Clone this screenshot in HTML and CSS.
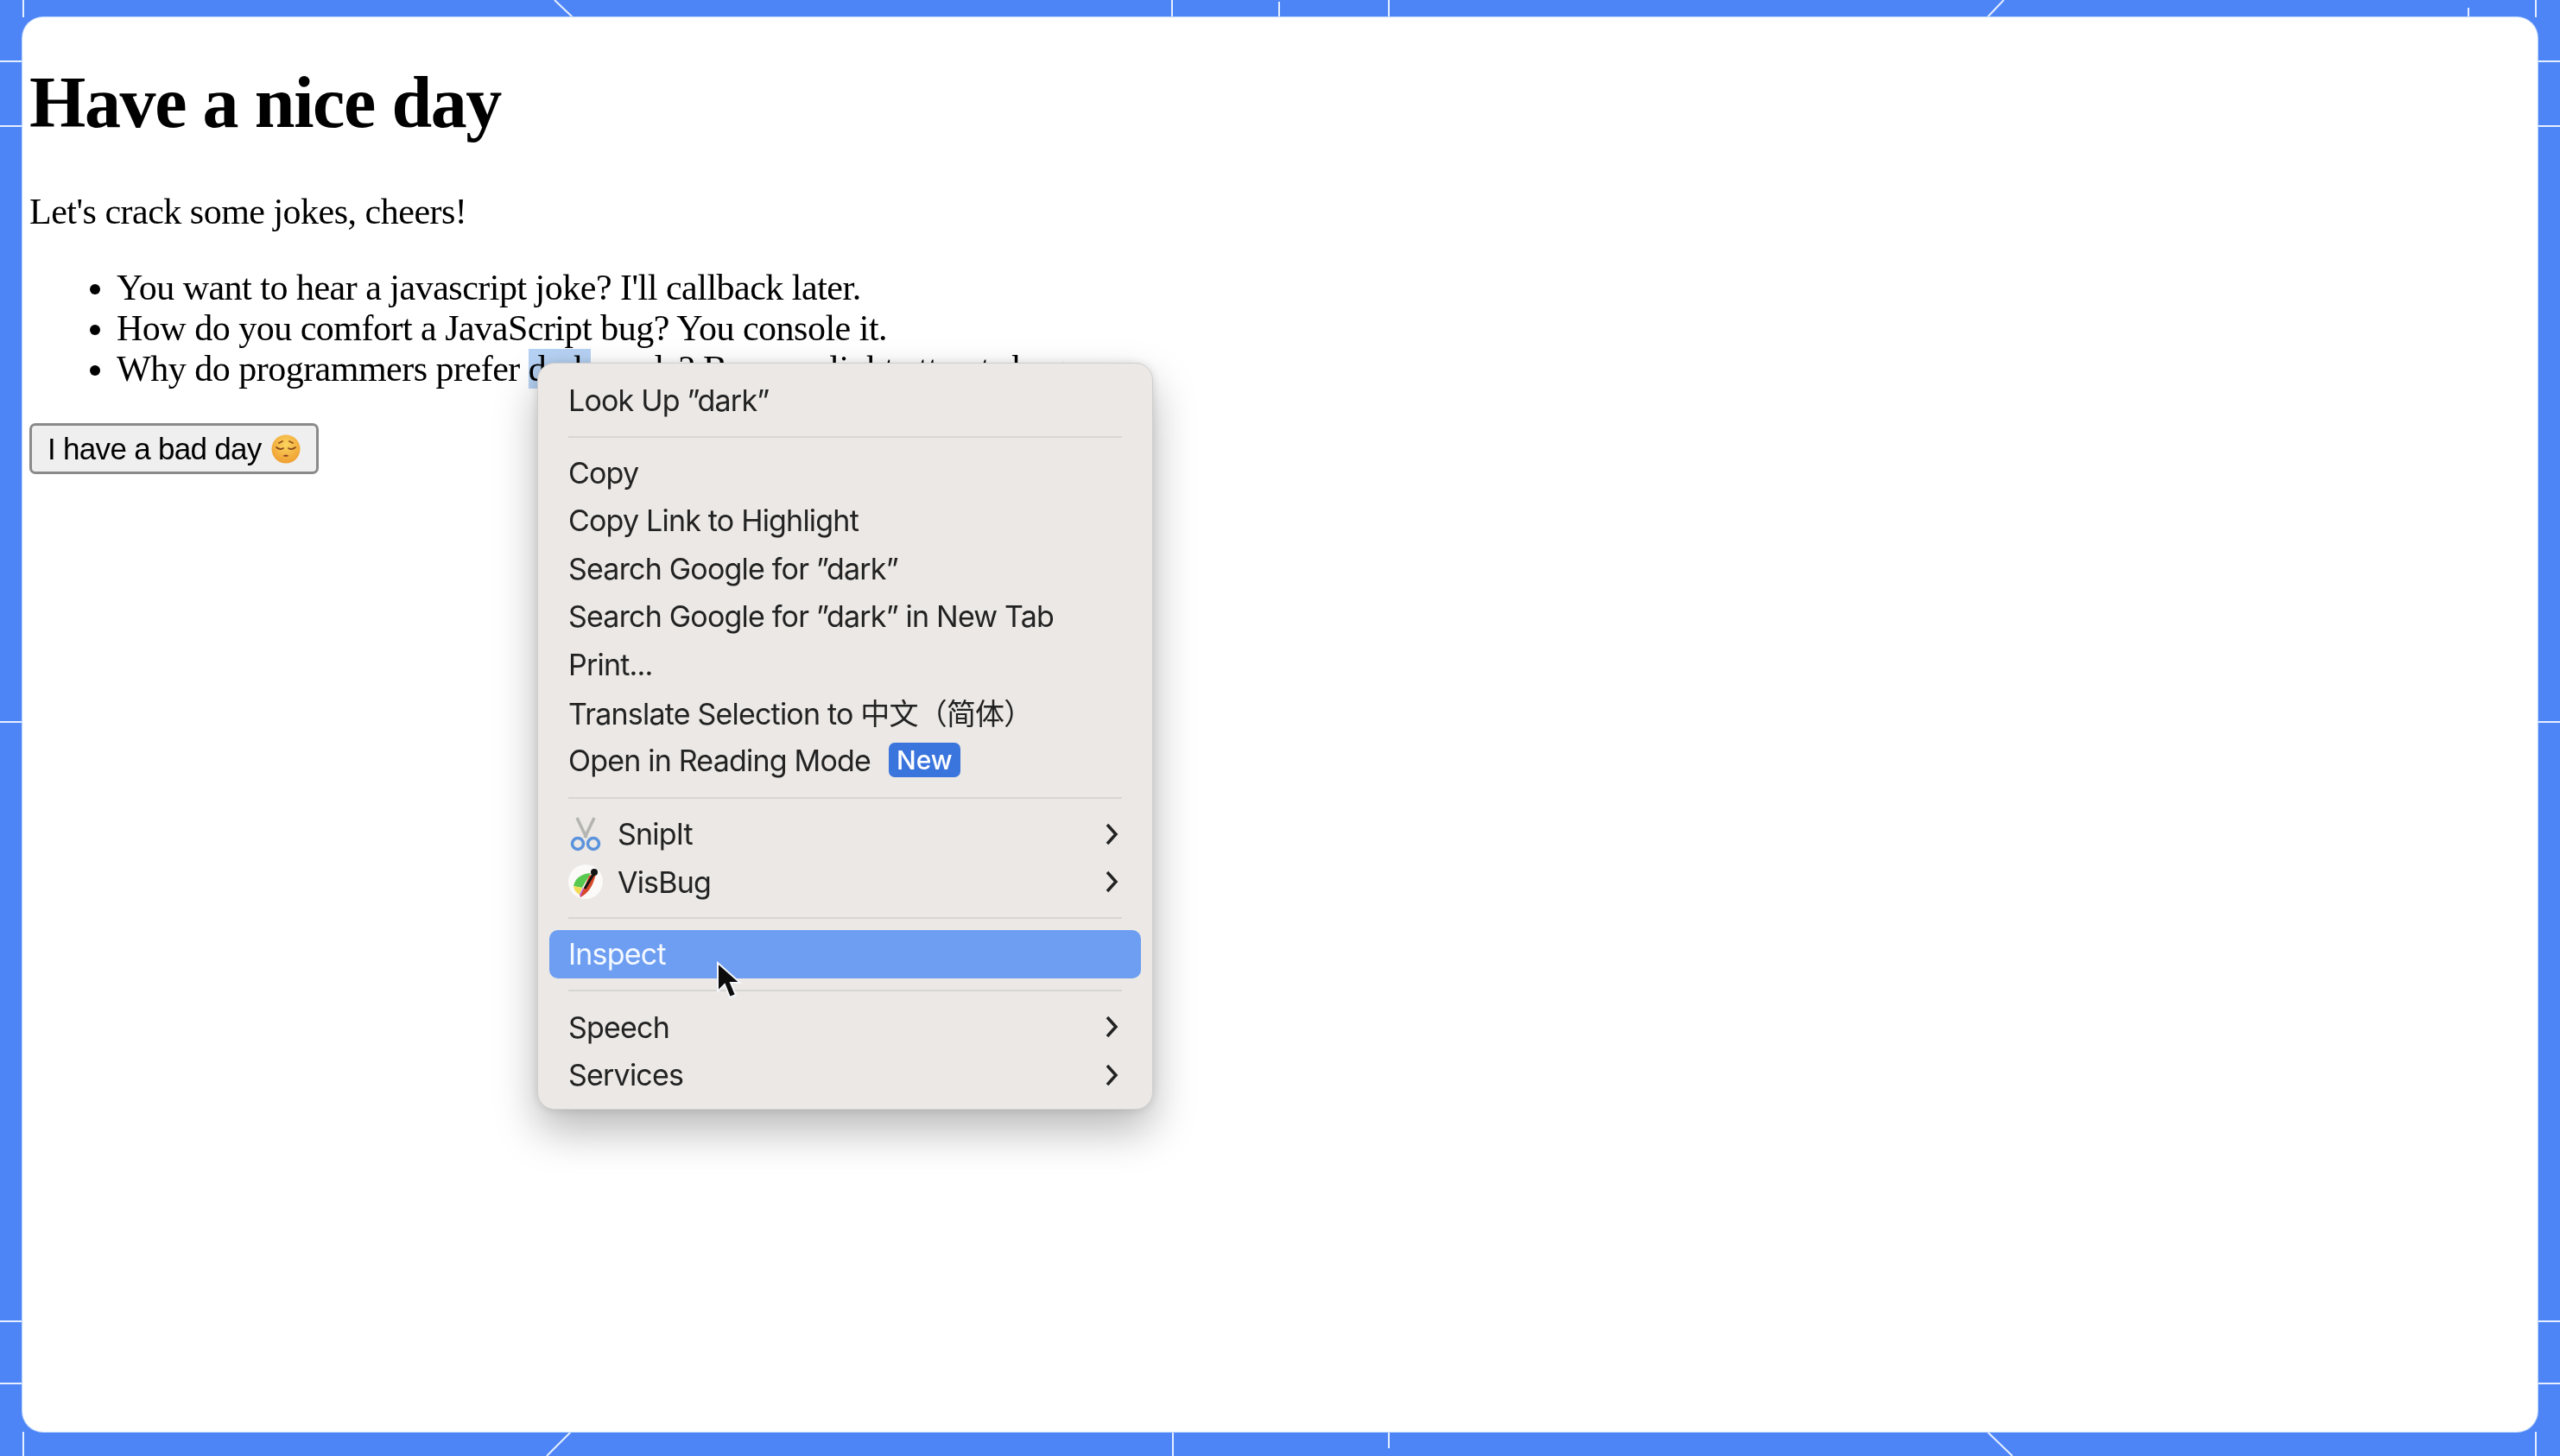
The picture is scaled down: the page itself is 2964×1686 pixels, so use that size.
FILE: index.html
```html
<!DOCTYPE html>
<html lang="en">
<head>
<meta charset="utf-8">
<title>Have a nice day</title>
<link rel="stylesheet" href="styles.css">
</head>
<body>
<svg class="frame-lines" width="2964" height="1686" viewBox="0 0 2964 1686" aria-hidden="true">
  <path d="M0 71H26M0 146H26M0 836H26M0 1530H26M0 1602H26M2938 71H2964M2938 146H2964M2938 836H2964M2938 1530H2964M2938 1602H2964M27 0V20M27 1658V1686M2936 0V20M2936 1658V1686M642 0L663 20M1357 0V20M1481 2V20M1608 0V20M2320 0L2301 20M2858 9V20M661 1658L633 1686M1358 1658V1686M1608 1658V1677M2301 1658L2330 1686"/>
</svg>
<main class="card">
  <h1 class="title">Have a nice day</h1>
  <p class="intro">Let's crack some jokes, cheers!</p>
  <ul class="jokes">
    <li>You want to hear a javascript joke? I'll callback later.</li>
    <li>How do you comfort a JavaScript bug? You console it.</li>
    <li>Why do programmers prefer <span class="selected">dark</span> mode? Because light attracts bugs.</li>
  </ul>
  <button class="bad-day" type="button">I have a bad day
    <svg class="emoji" width="34" height="34" viewBox="0 0 34 34" aria-hidden="true">
      <defs><radialGradient id="face" cx="50%" cy="35%" r="70%"><stop offset="0" stop-color="#fbd45e"/><stop offset="1" stop-color="#ee9a2e"/></radialGradient></defs>
      <circle cx="17" cy="17" r="16.5" fill="url(#face)"/>
      <path d="M6 15q4 3.500 8 1M20 16q4 2.500 8-1M9 10l4-2M25 10l-4-2" fill="none" stroke="#8a4d1e" stroke-width="1.800" stroke-linecap="round"/>
      <path d="M13.500 25q3.500-3 7 0q-3.500 1.500-7 0z" fill="#8a3d1e"/>
    </svg>
  </button>
</main>

<nav class="menu">
  <div class="row">Look Up ”dark”</div>
  <div class="sep sep-a"></div>
  <div class="row">Copy</div>
  <div class="row">Copy Link to Highlight</div>
  <div class="row">Search Google for ”dark”</div>
  <div class="row">Search Google for ”dark” in New Tab</div>
  <div class="row">Print...</div>
  <div class="row">Translate Selection to 中文（简体）</div>
  <div class="row">Open in Reading Mode <span class="badge">New</span></div>
  <div class="sep sep-b"></div>
  <div class="row">
    <svg class="ext-icon" width="40" height="40" viewBox="0 0 40 40" aria-hidden="true">
      <path d="M10 1L21 24M30 1L19 24" fill="none" stroke="#b4b4b2" stroke-width="3.500"/>
      <circle cx="11" cy="31" r="6.500" fill="none" stroke="#5b93dc" stroke-width="3.500"/>
      <circle cx="29" cy="31" r="6.500" fill="none" stroke="#5b93dc" stroke-width="3.500"/>
    </svg>
    <span class="label">SnipIt</span>
    <svg class="chev" width="16" height="26" viewBox="0 0 16 26" aria-hidden="true"><path d="M3 2l10 11L3 24"/></svg>
  </div>
  <div class="row">
    <svg class="ext-icon" width="40" height="40" viewBox="0 0 40 40" aria-hidden="true">
      <circle cx="20" cy="20" r="20" fill="#fbfaf8"/>
      <path d="M6 25Q9 11 26 10L16 27z" fill="#58c94f"/>
      <path d="M6 25L16 27L13 35Q7 32 6 25z" fill="#f2dc55"/>
      <path d="M13 35L17 27L20 31Q18 35 14 38z" fill="#c45bd0"/>
      <path d="M14 38Q28 31 32 10L24 13z" fill="#d8482a"/>
      <path d="M19 28L30 10" stroke="#141414" stroke-width="3"/>
      <circle cx="30" cy="9" r="4" fill="#141414"/>
    </svg>
    <span class="label">VisBug</span>
    <svg class="chev" width="16" height="26" viewBox="0 0 16 26" aria-hidden="true"><path d="M3 2l10 11L3 24"/></svg>
  </div>
  <div class="sep sep-c"></div>
  <div class="row row-active">Inspect</div>
  <div class="sep"></div>
  <div class="row">
    <span class="label">Speech</span>
    <svg class="chev" width="16" height="26" viewBox="0 0 16 26" aria-hidden="true"><path d="M3 2l10 11L3 24"/></svg>
  </div>
  <div class="row">
    <span class="label">Services</span>
    <svg class="chev" width="16" height="26" viewBox="0 0 16 26" aria-hidden="true"><path d="M3 2l10 11L3 24"/></svg>
  </div>
</nav>

<svg class="cursor" width="30" height="46" viewBox="0 0 30 46" aria-hidden="true">
  <path d="M2 2V35L10 27L16 42L23 39L17 25H28z" fill="#0c0c0c" stroke="#f4f6fb" stroke-width="2"/>
</svg>
</body>
</html>
```
FILE: styles.css
```css
html, body {
  margin: 0;
  padding: 0;
}
body {
  position: relative;
  box-sizing: border-box;
  width: 2964px;
  height: 1686px;
  overflow: hidden;
  padding: 20px 26px 28px 26px;
  background: #4d85f7;
  display: flex;
}
.frame-lines {
  position: absolute;
  left: 0;
  top: 0;
}
.frame-lines path {
  fill: none;
  stroke: #e6efff;
  stroke-width: 2;
}
.card {
  position: relative;
  flex: 1;
  box-sizing: border-box;
  background: #fff;
  border-radius: 24px;
  box-shadow: 0 0 0 1px #b9d3fd;
  padding: 0 8px;
  font-family: "Liberation Serif", "Times New Roman", serif;
  color: #000;
  font-size: 42px;
  letter-spacing: -0.5px;
  filter: blur(0.5px);
}
.title {
  margin: 50px 0 0;
  font-size: 84px;
  line-height: 97px;
  font-weight: 700;
  letter-spacing: -1.4px;
}
.intro {
  margin: 54px 0 0;
  line-height: 48px;
}
.jokes {
  margin: 41px 0 0;
  padding: 0 0 0 101px;
  line-height: 47px;
}
.selected {
  background: #b5d1f3;
}
.bad-day {
  display: flex;
  align-items: center;
  gap: 11px;
  box-sizing: border-box;
  width: 335px;
  height: 59px;
  margin: 39px 0 0;
  padding: 0 0 0 18px;
  background: #efefef;
  border: 3px solid #8a8a8a;
  border-radius: 7px;
  font-family: "Liberation Sans", Arial, sans-serif;
  font-size: 35px;
  letter-spacing: -0.7px;
  color: #000;
}
.emoji {
  flex: none;
}
.menu {
  position: absolute;
  left: 622px;
  top: 420px;
  box-sizing: border-box;
  width: 713px;
  height: 865px;
  padding: 15px 13px 0;
  background: #ebe8e5;
  border: 1px solid #d0cecc;
  border-radius: 20px;
  box-shadow: 0 24px 50px rgba(0, 0, 0, 0.28), 0 0 12px rgba(0, 0, 0, 0.12);
  font-family: Inter, "Noto Sans CJK SC", sans-serif;
  font-size: 34px;
  letter-spacing: -0.8px;
  color: #222;
  filter: blur(0.5px);
}
.row {
  display: flex;
  align-items: center;
  height: 55.5px;
  padding: 0 22px;
  white-space: pre;
}
.label {
  flex: 1;
}
.ext-icon {
  flex: none;
  margin-right: 17px;
}
.chev {
  flex: none;
  margin-right: 4px;
}
.chev path {
  fill: none;
  stroke: #222;
  stroke-width: 3.5;
}
.badge {
  display: flex;
  align-items: center;
  justify-content: center;
  width: 83px;
  height: 40px;
  margin-left: 12px;
  border-radius: 7px;
  background: #3a74dd;
  color: #fff;
  font-size: 30px;
  font-weight: 500;
  letter-spacing: 0;
}
.sep {
  height: 2px;
  margin: 13px 22px 14px;
  background: #d8d6d3;
}
.sep-a {
  margin-bottom: 13px;
}
.sep-b {
  margin-top: 15px;
  margin-bottom: 13px;
}
.sep-c {
  margin-bottom: 13px;
}
.row-active {
  background: #6d9ef2;
  color: #f4f8ff;
  border-radius: 10px;
}
.cursor {
  position: absolute;
  left: 829px;
  top: 1113px;
}
```
